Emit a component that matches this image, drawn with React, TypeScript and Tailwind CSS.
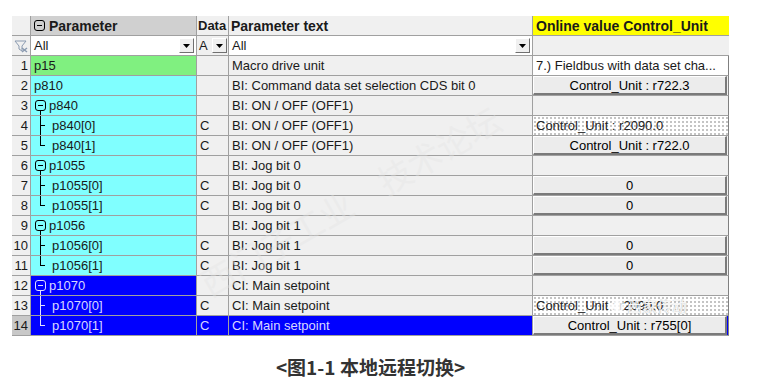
import React from 'react';

type Online =
  | { kind: 'plain'; text: string }
  | { kind: 'button'; text: string }
  | { kind: 'dotted'; text: string }
  | { kind: 'empty' };

type Row = {
  n: number;
  name: string;
  tree?: 'parent' | 'mid' | 'last';
  data: string;
  text: string;
  online: Online;
  color: 'green' | 'cyan' | 'blue';
};

const rows: Row[] = [
  { n: 1, name: 'p15', data: '', text: 'Macro drive unit', online: { kind: 'plain', text: '7.) Fieldbus with data set cha...' }, color: 'green' },
  { n: 2, name: 'p810', data: '', text: 'BI: Command data set selection CDS bit 0', online: { kind: 'button', text: 'Control_Unit : r722.3' }, color: 'cyan' },
  { n: 3, name: 'p840', tree: 'parent', data: '', text: 'BI: ON / OFF (OFF1)', online: { kind: 'empty' }, color: 'cyan' },
  { n: 4, name: 'p840[0]', tree: 'mid', data: 'C', text: 'BI: ON / OFF (OFF1)', online: { kind: 'dotted', text: 'Control_Unit : r2090.0' }, color: 'cyan' },
  { n: 5, name: 'p840[1]', tree: 'last', data: 'C', text: 'BI: ON / OFF (OFF1)', online: { kind: 'button', text: 'Control_Unit : r722.0' }, color: 'cyan' },
  { n: 6, name: 'p1055', tree: 'parent', data: '', text: 'BI: Jog bit 0', online: { kind: 'empty' }, color: 'cyan' },
  { n: 7, name: 'p1055[0]', tree: 'mid', data: 'C', text: 'BI: Jog bit 0', online: { kind: 'button', text: '0' }, color: 'cyan' },
  { n: 8, name: 'p1055[1]', tree: 'last', data: 'C', text: 'BI: Jog bit 0', online: { kind: 'button', text: '0' }, color: 'cyan' },
  { n: 9, name: 'p1056', tree: 'parent', data: '', text: 'BI: Jog bit 1', online: { kind: 'empty' }, color: 'cyan' },
  { n: 10, name: 'p1056[0]', tree: 'mid', data: 'C', text: 'BI: Jog bit 1', online: { kind: 'button', text: '0' }, color: 'cyan' },
  { n: 11, name: 'p1056[1]', tree: 'last', data: 'C', text: 'BI: Jog bit 1', online: { kind: 'button', text: '0' }, color: 'cyan' },
  { n: 12, name: 'p1070', tree: 'parent', data: '', text: 'CI: Main setpoint', online: { kind: 'empty' }, color: 'blue' },
  { n: 13, name: 'p1070[0]', tree: 'mid', data: 'C', text: 'CI: Main setpoint', online: { kind: 'dotted', text: 'Control_Unit : r2090.0' }, color: 'blue' },
  { n: 14, name: 'p1070[1]', tree: 'last', data: 'C', text: 'CI: Main setpoint', online: { kind: 'button', text: 'Control_Unit : r755[0]' }, color: 'blue' },
];

function TreeGlyph({ type, light }: { type: 'parent' | 'mid' | 'last'; light: boolean }) {
  const c = light ? '#e0e0ff' : '#000';
  if (type === 'parent') {
    return (
      <svg width="14" height="19" className="shrink-0">
        <rect x="1.5" y="4.5" width="10" height="10" rx="2.5" fill="none" stroke={c} />
        <line x1="4" y1="9.5" x2="9" y2="9.5" stroke={c} />
        <line x1="6.5" y1="14.5" x2="6.5" y2="19" stroke={c} />
      </svg>
    );
  }
  return (
    <svg width="18" height="19" className="shrink-0">
      <line x1="6.5" y1="0" x2="6.5" y2={type === 'mid' ? 19 : 10} stroke={c} />
      <line x1="6.5" y1="9.5" x2="11" y2="9.5" stroke={c} />
    </svg>
  );
}

function DropBtn() {
  return (
    <div className="w-[15px] h-[15px] bg-[#f0f0f0] border-t border-l border-white border-r border-b border-r-[#707070] border-b-[#707070] flex items-center justify-center">
      <svg width="7" height="4">
        <polygon points="0,0 7,0 3.5,4" fill="#000" />
      </svg>
    </div>
  );
}

function FilterIcon() {
  return (
    <svg width="14" height="14" viewBox="0 0 14 14">
      <polygon points="1,2 12,2 8,7 8,12 5,10 5,7" fill="none" stroke="#8a9ab0" />
      <line x1="8" y1="9" x2="13" y2="13" stroke="#8a9ab0" strokeWidth="1.5" />
      <line x1="13" y1="9" x2="8" y2="13" stroke="#8a9ab0" strokeWidth="1.5" />
    </svg>
  );
}

function OnlineCell({ o, blue }: { o: Online; blue: boolean }) {
  const base = 'h-[20px] border-b border-[#a0a0a0] border-r border-r-[#808080]';
  if (o.kind === 'plain') {
    return <div className={`${base} bg-white pl-[3px] flex items-center whitespace-nowrap overflow-hidden`}>{o.text}</div>;
  }
  if (o.kind === 'dotted') {
    return (
      <div className={`${base} bg-white bg-[radial-gradient(#c4c4c4_0.8px,transparent_0.9px)] bg-[length:4px_4px] pl-[3px] flex items-center text-[#222] whitespace-nowrap`}>
        {o.text}
      </div>
    );
  }
  if (o.kind === 'button') {
    return (
      <div className={`${base} ${blue ? 'bg-[#0000ff]' : 'bg-[#f0f0f0]'} p-0`}>
        <div className="h-full w-[194px] bg-[#ececec] border-t border-l border-white border-r-2 border-b-2 border-r-[#7a7a7a] border-b-[#7a7a7a] flex items-center justify-center text-black">
          {o.text}
        </div>
      </div>
    );
  }
  return <div className={`${base} bg-[#f0f0f0]`} />;
}

export default function App() {
  const nameBg = { green: 'bg-[#80f080]', cyan: 'bg-[#80ffff]', blue: 'bg-[#0000ff] text-[#d8d8ff]' };

  return (
    <div className="w-[757px] h-[379px] bg-white font-['Liberation_Sans','Noto_Sans_CJK_SC',sans-serif] relative overflow-hidden">
      <div className="pt-[16px] pl-[12px]">
        <div className="grid grid-cols-[19px_166px_32px_304px_196px] text-[13px] leading-none text-[#1a1a1a] w-[717px] border-r border-[#808080]">
          {/* header */}
          <div className="h-[20px] bg-[#f0f0f0] border-r border-b border-[#a0a0a0]" />
          <div className="h-[20px] bg-[#d0d0d0] border-r border-b border-[#a0a0a0] flex items-center pl-[3px] gap-[4px] font-bold text-[14px]">
            <svg width="11" height="11">
              <rect x="0.5" y="0.5" width="10" height="10" rx="2.5" fill="none" stroke="#000" />
              <line x1="3" y1="5.5" x2="8" y2="5.5" stroke="#000" />
            </svg>
            Parameter
          </div>
          <div className="h-[20px] bg-[#f0f0f0] border-r border-b border-[#a0a0a0] flex items-center pl-[1px] font-bold text-[13px]">Data</div>
          <div className="h-[20px] bg-[#f0f0f0] border-r border-b border-[#a0a0a0] flex items-center pl-[2px] font-bold text-[14px]">Parameter text</div>
          <div className="h-[20px] bg-[#ffff00] border-b border-[#a0a0a0] flex items-center pl-[3px] font-bold text-[14px]">Online value Control_Unit</div>

          {/* filter row */}
          <div className="h-[20px] bg-[#f0f0f0] border-r border-b border-[#a0a0a0] flex items-center justify-center">
            <FilterIcon />
          </div>
          <div className="h-[20px] bg-white border-r border-b border-[#a0a0a0] flex items-center justify-between pl-[3px] pr-[2px]">
            <span>All</span>
            <DropBtn />
          </div>
          <div className="h-[20px] bg-[#f0f0f0] border-r border-b border-[#a0a0a0] flex items-center justify-between pl-[2px] pr-[1px]">
            <span>A</span>
            <DropBtn />
          </div>
          <div className="h-[20px] bg-white border-r border-b border-[#a0a0a0] flex items-center justify-between pl-[3px] pr-[2px]">
            <span>All</span>
            <DropBtn />
          </div>
          <div className="h-[20px] bg-[#f0f0f0] border-b border-[#a0a0a0]" />

          {rows.map((r) => {
            const blue = r.color === 'blue';
            const sel = r.n === 14;
            return (
              <React.Fragment key={r.n}>
                <div
                  className={`h-[20px] ${sel ? 'bg-[#c8c8c8]' : 'bg-[#f0f0f0]'} border-r border-b border-[#a0a0a0] flex items-center justify-end pr-[2px]`}
                >
                  {r.n}
                </div>
                <div className={`h-[20px] ${nameBg[r.color]} border-r border-b border-[#a0a0a0] flex items-center pl-[3px]`}>
                  {r.tree && <TreeGlyph type={r.tree} light={blue} />}
                  <span className={r.tree === 'parent' ? 'ml-[1px]' : ''}>{r.name}</span>
                </div>
                <div className={`h-[20px] ${sel ? 'bg-[#0000ff] text-[#d8d8ff]' : 'bg-[#f0f0f0]'} border-r border-b border-[#a0a0a0] flex items-center pl-[3px]`}>
                  {r.data}
                </div>
                <div className={`h-[20px] ${sel ? 'bg-[#0000ff] text-[#d8d8ff]' : 'bg-[#f0f0f0]'} border-r border-b border-[#a0a0a0] flex items-center pl-[3px] whitespace-nowrap overflow-hidden`}>
                  {r.text}
                </div>
                <OnlineCell o={r.online} blue={sel} />
              </React.Fragment>
            );
          })}
        </div>
      </div>

      <div className="w-[717px] ml-[12px] mt-[20px] text-center text-[19px] font-bold text-[#333] font-['Noto_Sans_CJK_SC',sans-serif] leading-[21px]">
        &lt;图1-1 本地远程切换&gt;
      </div>

      {/* faint watermark */}
      <div className="absolute left-[180px] top-[175px] -rotate-[30deg] text-[34px] text-[#e4e4e4]/40 font-['Noto_Sans_CJK_SC',sans-serif] pointer-events-none whitespace-nowrap">
        西门子工业　技术论坛
      </div>
      <div className="absolute left-[610px] top-[295px] flex items-center gap-[3px] text-[15px] text-white/90 font-['Noto_Sans_CJK_SC',sans-serif] pointer-events-none [text-shadow:0_0_1px_#999]">
        <span className="w-[14px] h-[11px] rounded-full bg-white/80 inline-block" />
        西家传动
      </div>
    </div>
  );
}
